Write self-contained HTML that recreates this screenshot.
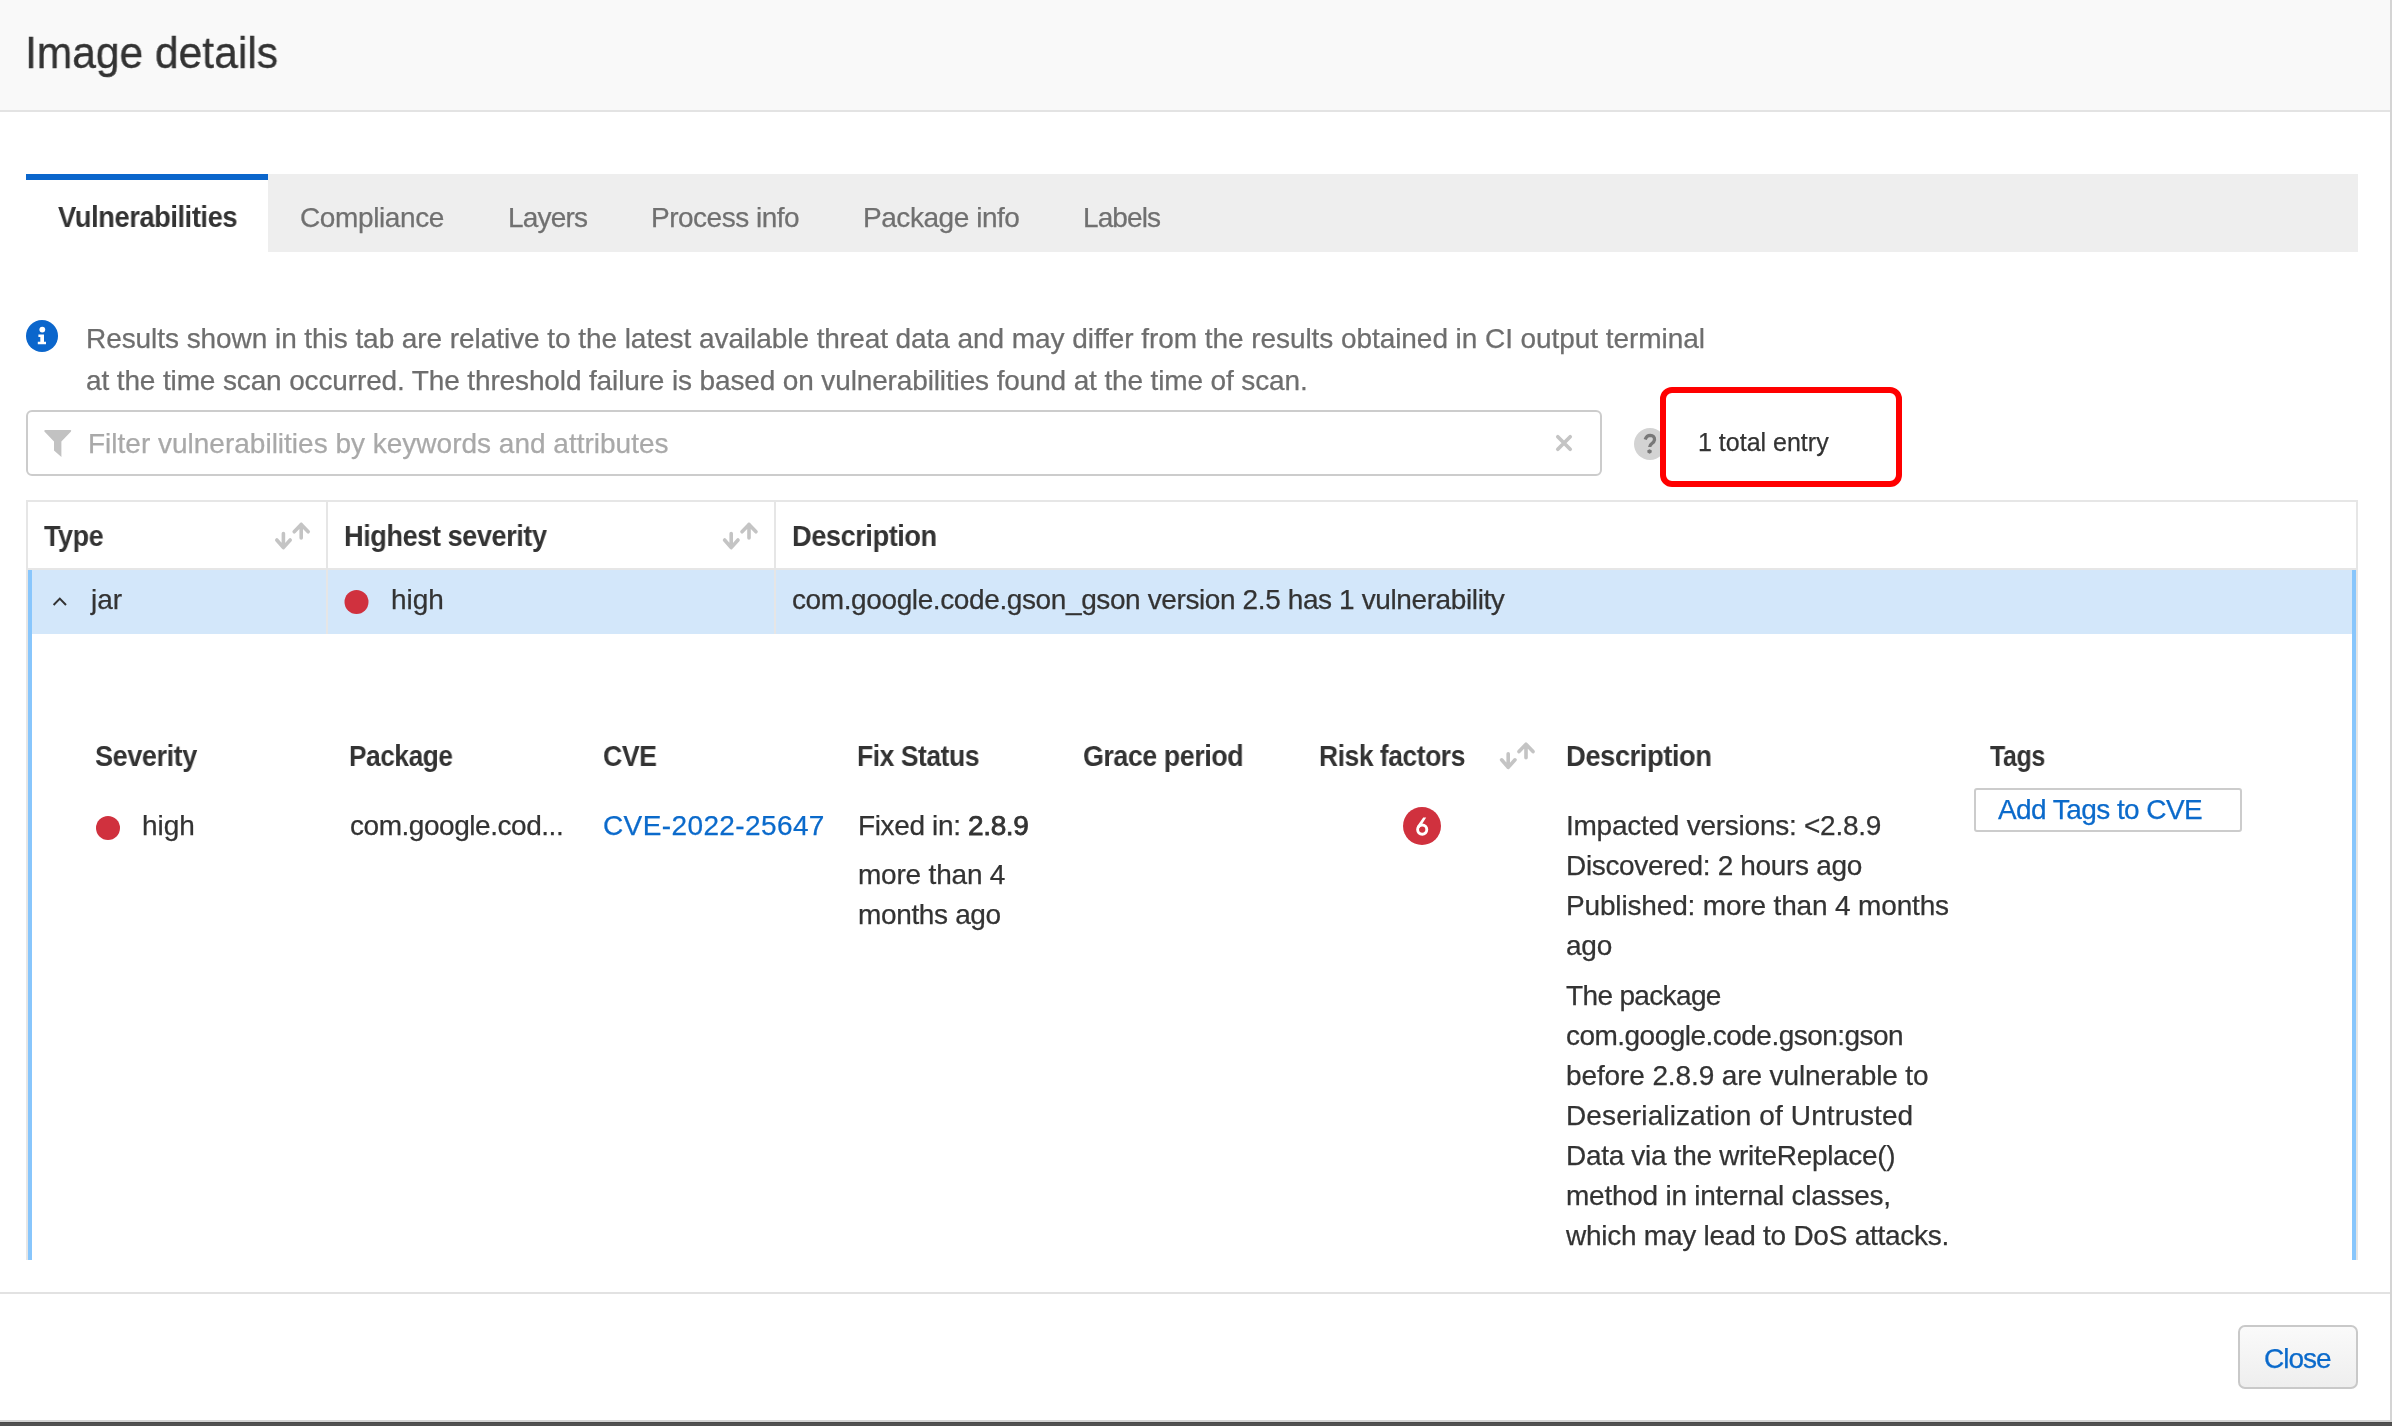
<!DOCTYPE html>
<html>
<head>
<meta charset="utf-8">
<style>
html,body{margin:0;padding:0;}
body{width:2392px;height:1426px;position:relative;overflow:hidden;background:#fff;font-family:"Liberation Sans",sans-serif;color:#333;}
.a{position:absolute;white-space:nowrap;line-height:40px;font-size:28px;will-change:transform;-webkit-text-stroke:0.25px currentColor;}
.b{font-weight:700;-webkit-text-stroke:0;}
.blk{position:absolute;}
svg{position:absolute;overflow:visible;}
</style>
</head>
<body>
<!-- header -->
<div class="blk" style="left:0;top:0;width:2390px;height:110px;background:#f9f9f9;border-bottom:2px solid #e3e3e3;"></div>
<div class="a" style="left:25px;top:23px;font-size:45px;line-height:60px;color:#333;-webkit-text-stroke:0.35px #333;transform:scaleX(0.945);transform-origin:0 0;">Image details</div>

<!-- page right border -->
<div class="blk" style="left:2390px;top:0;width:2px;height:1420px;background:#d4d4d4;"></div>

<!-- tabs -->
<div class="blk" style="left:26px;top:174px;width:2332px;height:78px;background:#eeeeee;"></div>
<div class="blk" style="left:26px;top:174px;width:242px;height:78px;background:#fff;"></div>
<div class="blk" style="left:26px;top:174px;width:242px;height:6px;background:#0b66cc;"></div>
<div class="a b" style="left:58px;top:197px;letter-spacing:-0.5px;font-size:29px;transform:scaleX(0.9443);transform-origin:0 0;">Vulnerabilities</div>
<div class="a" style="left:300px;top:198px;color:#707070;letter-spacing:-0.39px;">Compliance</div>
<div class="a" style="left:508px;top:198px;color:#707070;letter-spacing:-0.8px;">Layers</div>
<div class="a" style="left:651px;top:198px;color:#707070;letter-spacing:-0.5px;">Process info</div>
<div class="a" style="left:863px;top:198px;color:#707070;letter-spacing:-0.45px;">Package info</div>
<div class="a" style="left:1083px;top:198px;color:#707070;letter-spacing:-0.9px;">Labels</div>

<!-- info -->
<svg style="left:0;top:0" width="1" height="1">
  <circle cx="42" cy="336" r="16" fill="#0b66cc"/>
  <circle cx="42.3" cy="329.6" r="2.9" fill="#fff"/>
  <path d="M38.4 334.4 H44 V341.8 H46 V344.2 H37.8 V341.8 H40.3 V337 H38.4 Z" fill="#fff"/>
</svg>
<div class="a" style="left:86px;top:319px;color:#6e6e6e;letter-spacing:-0.063px;">Results shown in this tab are relative to the latest available threat data and may differ from the results obtained in CI output terminal</div>
<div class="a" style="left:86px;top:361px;color:#6e6e6e;letter-spacing:-0.133px;">at the time scan occurred. The threshold failure is based on vulnerabilities found at the time of scan.</div>

<!-- filter -->
<div class="blk" style="left:26px;top:410px;width:1572px;height:62px;border:2px solid #cccccc;border-radius:6px;"></div>
<svg style="left:0;top:0" width="1" height="1">
  <path d="M45 430 H70.6 Q71.8 430.6 71 431.6 L61.4 441.4 V457 L54 450.4 V441.4 L44.4 431.6 Q43.8 430.6 45 430 Z" fill="#c2c2c2"/>
  <path d="M1557.8 436.8 L1570.2 449.2 M1570.2 436.8 L1557.8 449.2" stroke="#c4c4c4" stroke-width="3.7" stroke-linecap="round"/>
</svg>
<div class="a" style="left:88px;top:424px;color:#a9a9a9;">Filter vulnerabilities by keywords and attributes</div>

<!-- help -->
<div class="blk" style="left:1634px;top:428px;width:32px;height:32px;border-radius:50%;background:#d3d3d3;"></div>
<svg style="left:0;top:0" width="1" height="1">
  <path d="M1645.2 439.6 Q1646.6 435.4 1650.2 435.4 Q1654.8 435.6 1654.5 439.8 Q1654.2 442.2 1651.8 443.6 Q1649.8 444.9 1649.7 447" stroke="#787878" stroke-width="3.3" fill="none"/>
  <path d="M1647.4 450.2 L1649.6 449.2 L1651.8 450.4 L1651.6 452.4 L1649.6 453.8 L1647.4 452.4 Z" fill="#787878"/>
</svg>

<!-- red highlight -->
<div class="blk" style="left:1660px;top:387px;width:230px;height:88px;border:6px solid #ff0000;border-radius:12px;background:#fff;"></div>
<div class="a" style="left:1698px;top:422px;font-size:25px;color:#333;">1 total entry</div>

<!-- table -->
<div class="blk" id="tbl" style="left:26px;top:500px;width:2332px;height:760px;overflow:hidden;">
  <div class="blk" style="left:0;top:0;width:2328px;height:2000px;border:2px solid #e6e6e6;"></div>
</div>
<!-- header row bottom border -->
<div class="blk" style="left:28px;top:568px;width:2328px;height:2px;background:#e6e6e6;"></div>
<!-- jar row -->
<div class="blk" style="left:28px;top:570px;width:2328px;height:64px;background:#d3e7fa;"></div>
<!-- column separators -->
<div class="blk" style="left:326px;top:502px;width:2px;height:132px;background:#e6e6e6;"></div>
<div class="blk" style="left:774px;top:502px;width:2px;height:132px;background:#e6e6e6;"></div>
<!-- blue left/right -->
<div class="blk" style="left:28px;top:570px;width:4px;height:690px;background:#88c6fc;"></div>
<div class="blk" style="left:2352px;top:570px;width:4px;height:690px;background:#88c6fc;"></div>

<div class="a b" style="left:44px;top:516px;letter-spacing:-0.5px;font-size:29px;transform:scaleX(0.9298);transform-origin:0 0;">Type</div>
<div class="a b" style="left:344px;top:516px;letter-spacing:-0.5px;font-size:29px;transform:scaleX(0.9375);transform-origin:0 0;">Highest severity</div>
<div class="a b" style="left:792px;top:516px;letter-spacing:-0.5px;font-size:29px;transform:scaleX(0.9394);transform-origin:0 0;">Description</div>

<svg style="left:0;top:0" width="1" height="1">
  <g stroke="#c4c4c4" stroke-width="3.6" stroke-linecap="round" stroke-linejoin="round" fill="none">
    <path d="M283.4 533.6 V547.6 M276.8 540 L283.4 547.6 L290.2 540"/>
    <path d="M301.2 538 V524.4 M294.2 531.8 L301.2 524.4 L308.2 531.8"/>
    <path d="M731.2 533.6 V547.6 M724.6 540 L731.2 547.6 L738 540"/>
    <path d="M749 538 V524.4 M742 531.8 L749 524.4 L756 531.8"/>
    <path d="M1508.2 753.8 V767.4 M1501.6 759.8 L1508.2 767.4 L1515 759.8"/>
    <path d="M1526 757.8 V744.2 M1519 751.6 L1526 744.2 L1533 751.6"/>
  </g>
  <path d="M53.6 605 L59.8 598.6 L66 605" stroke="#333" stroke-width="2" fill="none"/>
  <circle cx="356.5" cy="602" r="12" fill="#d0313e"/>
  <circle cx="108" cy="828" r="12" fill="#d0313e"/>
  <circle cx="1422" cy="826" r="19" fill="#d0313e"/>
</svg>

<div class="a" style="left:91px;top:580px;">jar</div>
<div class="a" style="left:391px;top:580px;">high</div>
<div class="a" style="left:792px;top:580px;letter-spacing:-0.39px;">com.google.code.gson_gson version 2.5 has 1 vulnerability</div>

<!-- sub table header -->
<div class="a b" style="left:95px;top:736px;letter-spacing:-0.5px;font-size:29px;transform:scaleX(0.9356);transform-origin:0 0;">Severity</div>
<div class="a b" style="left:349px;top:736px;letter-spacing:-0.5px;font-size:29px;transform:scaleX(0.9066);transform-origin:0 0;">Package</div>
<div class="a b" style="left:603px;top:736px;letter-spacing:-0.5px;font-size:29px;transform:scaleX(0.9201);transform-origin:0 0;">CVE</div>
<div class="a b" style="left:857px;top:736px;letter-spacing:-0.5px;font-size:29px;transform:scaleX(0.9134);transform-origin:0 0;">Fix Status</div>
<div class="a b" style="left:1083px;top:736px;letter-spacing:-0.5px;font-size:29px;transform:scaleX(0.9259);transform-origin:0 0;">Grace period</div>
<div class="a b" style="left:1319px;top:736px;letter-spacing:-0.5px;font-size:29px;transform:scaleX(0.9114);transform-origin:0 0;">Risk factors</div>
<div class="a b" style="left:1566px;top:736px;letter-spacing:-0.5px;font-size:29px;transform:scaleX(0.9452);transform-origin:0 0;">Description</div>
<div class="a b" style="left:1990px;top:736px;letter-spacing:-0.5px;font-size:29px;transform:scaleX(0.8622);transform-origin:0 0;">Tags</div>

<div class="a" style="left:142px;top:806px;">high</div>
<div class="a" style="left:350px;top:806px;letter-spacing:-0.46px;">com.google.cod...</div>
<div class="a" style="left:603px;top:806px;color:#0b6acb;letter-spacing:0.39px;">CVE-2022-25647</div>
<div class="a" style="left:858px;top:806px;letter-spacing:-0.36px;">Fixed in: <span style="-webkit-text-stroke:0.75px #333;">2.8.9</span></div>
<div class="a" style="left:858px;top:855px;letter-spacing:-0.2px;">more than 4</div>
<div class="a" style="left:858px;top:895px;letter-spacing:-0.35px;">months ago</div>
<svg style="left:0;top:0" width="1" height="1">
  <circle cx="1422.2" cy="829.6" r="4.6" stroke="#fff" stroke-width="2.9" fill="none"/>
  <path d="M1426.2 817.4 L1423.2 817.4 L1416.9 826.4 L1419.6 828 Z" fill="#fff"/>
</svg>
<div class="a" style="left:1566px;top:806px;letter-spacing:-0.25px;">Impacted versions: &lt;2.8.9</div>
<div class="a" style="left:1566px;top:846px;letter-spacing:-0.33px;">Discovered: 2 hours ago</div>
<div class="a" style="left:1566px;top:886px;letter-spacing:-0.16px;">Published: more than 4 months</div>
<div class="a" style="left:1566px;top:926px;letter-spacing:-0.25px;">ago</div>
<div class="a" style="left:1566px;top:976px;letter-spacing:-0.65px;">The package</div>
<div class="a" style="left:1566px;top:1016px;letter-spacing:-0.525px;">com.google.code.gson:gson</div>
<div class="a" style="left:1566px;top:1056px;letter-spacing:-0.11px;">before 2.8.9 are vulnerable to</div>
<div class="a" style="left:1566px;top:1096px;letter-spacing:0.12px;">Deserialization of Untrusted</div>
<div class="a" style="left:1566px;top:1136px;letter-spacing:-0.31px;">Data via the writeReplace()</div>
<div class="a" style="left:1566px;top:1176px;letter-spacing:-0.25px;">method in internal classes,</div>
<div class="a" style="left:1566px;top:1216px;letter-spacing:-0.25px;">which may lead to DoS attacks.</div>

<div class="blk" style="left:1974px;top:788px;width:264px;height:40px;border:2px solid #cccccc;border-radius:3px;"></div>
<div class="a" style="left:1998px;top:790px;color:#0b6acb;letter-spacing:-0.57px;">Add Tags to CVE</div>

<!-- footer -->
<div class="blk" style="left:0;top:1292px;width:2390px;height:2px;background:#e2e2e2;"></div>
<div class="blk" style="left:2238px;top:1325px;width:116px;height:60px;border:2px solid #c9c9c9;border-radius:7px;background:linear-gradient(#fafafa,#eeeeee);"></div>
<div class="a" style="left:2264px;top:1339px;color:#0b6acb;letter-spacing:-1px;">Close</div>

<!-- bottom -->
<div class="blk" style="left:0;top:1420px;width:2392px;height:2px;background:#d4d4d4;"></div>
<div class="blk" style="left:0;top:1422px;width:2392px;height:4px;background:#515151;border-top:1px solid #494949;box-sizing:border-box;"></div>
</body>
</html>
